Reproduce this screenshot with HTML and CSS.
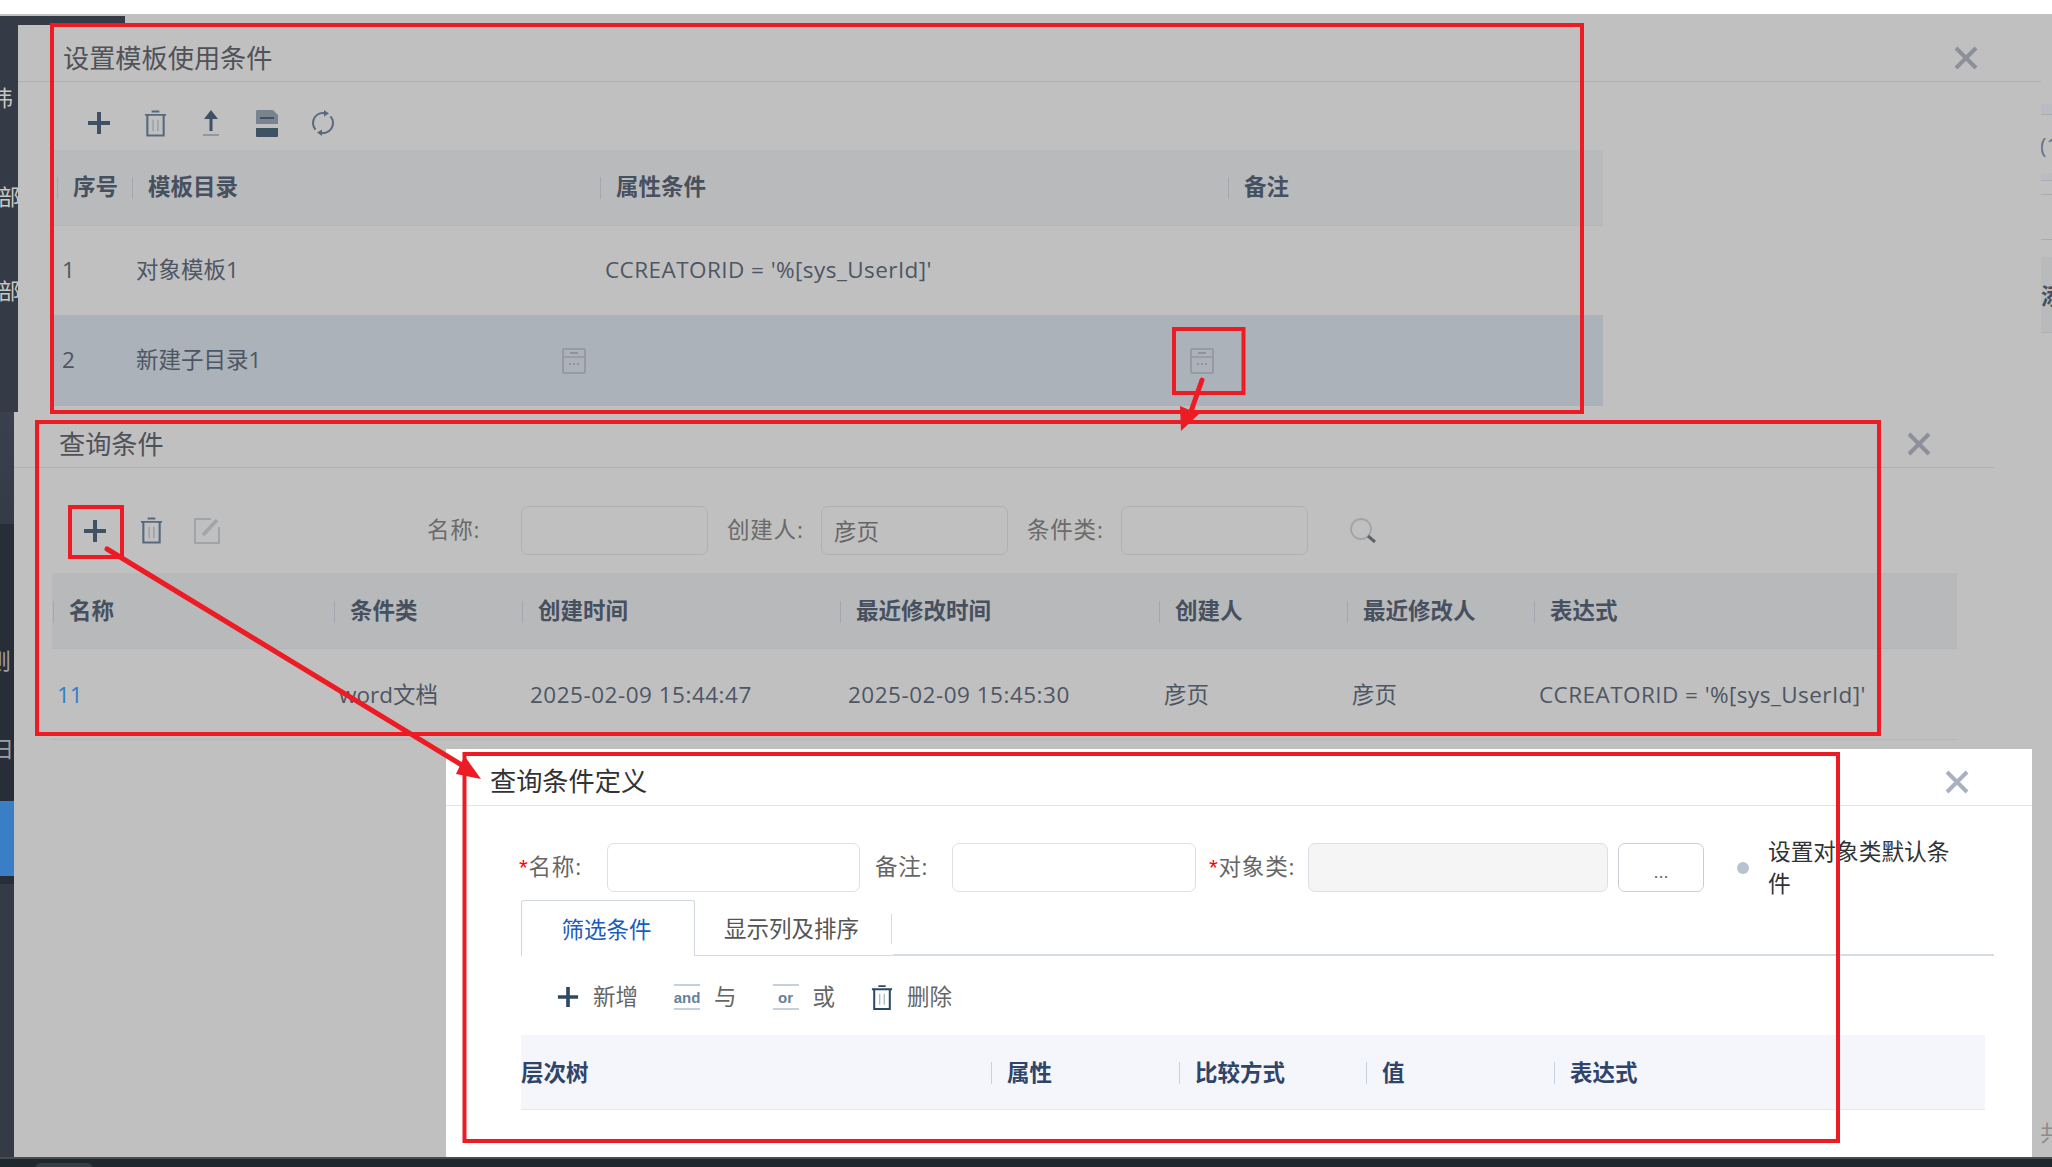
FILE: index.html
```html
<!DOCTYPE html>
<html lang="zh-CN">
<head>
<meta charset="utf-8">
<title>查询条件定义</title>
<link rel="stylesheet" href="styles.css">
</head>
<body>
<svg class="sprite" aria-hidden="true">
  <symbol id="i-plus" viewBox="0 0 24 24"><path d="M12 1v22M1 12h22" fill="none" stroke="currentColor" stroke-width="4"/></symbol>
  <symbol id="i-trash" viewBox="0 0 24 28"><path d="M8 1.500h8M1 5h22" fill="none" stroke="currentColor" stroke-width="2"/><path d="M3.500 5v21.500h17V5" fill="none" stroke="currentColor" stroke-width="2.200"/><path d="M9.500 10v12M14.500 10v12" fill="none" stroke="currentColor" stroke-width="1.400" opacity=".4"/></symbol>
  <symbol id="i-upload" viewBox="0 0 16 26"><path d="M8 0 15 9H9.500V21H6.500V9H1Z" fill="currentColor"/><path d="M0 25h16" stroke="currentColor" stroke-width="1.600" opacity=".45"/></symbol>
  <symbol id="i-save" viewBox="0 0 22 27"><path d="M1 0h16l5 5v9H0V1z" fill="currentColor" opacity=".55"/><path d="M4 8h14" stroke="currentColor" stroke-width="2"/><path d="M0 18h22v8a1 1 0 0 1-1 1H1a1 1 0 0 1-1-1z" fill="currentColor"/></symbol>
  <symbol id="i-refresh" viewBox="0 0 24 26"><path d="M15.500 3.600A10 10 0 0 0 4.500 19.600M8.500 22.400A10 10 0 0 0 19.500 6.400" fill="none" stroke="currentColor" stroke-width="2"/><path d="M13 0l5 3.500-5 3zM11 26l-5-3.500 5-3z" fill="currentColor"/></symbol>
  <symbol id="i-doc" viewBox="0 0 24 26"><rect x="1" y="1" width="22" height="24" rx="1" fill="none" stroke="currentColor" stroke-width="1.600"/><path d="M1 9h22" stroke="currentColor" stroke-width="1.400"/><path d="M8 5h8" stroke="currentColor" stroke-width="2"/><path d="M7 16h2M11 16h2M15 16h2" stroke="currentColor" stroke-width="2"/></symbol>
  <symbol id="i-edit" viewBox="0 0 26 26"><path d="M17 1H1v24h24V9" fill="none" stroke="currentColor" stroke-width="2"/><path d="M9 17 23 2" fill="none" stroke="currentColor" stroke-width="3.500"/></symbol>
  <symbol id="i-search" viewBox="0 0 27 25"><circle cx="11" cy="11" r="10" fill="none" stroke="currentColor" stroke-width="1.800"/><path d="M18 18l7 6" fill="none" stroke="#5f6266" stroke-width="3"/></symbol>
  <symbol id="i-close" viewBox="0 0 24 24"><path d="M2 2l20 20M22 2 2 22" fill="none" stroke="currentColor" stroke-width="4"/></symbol>
</svg>

<div class="screen">
  <div class="backdrop"></div>

  <div class="side-cap"></div>
  <nav class="side side-upper">
    <span class="side-label s1">伟</span>
    <span class="side-label s2">部门</span>
    <span class="side-label s3">部门</span>
  </nav>
  <nav class="side side-lower">
    <div class="side-a"></div>
    <div class="side-b">
      <span class="side-label s4">则</span>
      <span class="side-label s5">日志</span>
    </div>
    <div class="side-active"></div>
    <div class="side-c"></div>
    <div class="side-a side-fill"></div>
  </nav>

  <div class="peek">
    <div class="peek-band b1"></div>
    <div class="peek-text p1">(1</div>
    <div class="peek-band b2"></div>
    <div class="peek-line l1"></div>
    <div class="peek-line l2"></div>
    <div class="peek-head">添</div>
    <div class="peek-text p2">共</div>
  </div>

  <section class="dialog dlg-one">
    <header class="dlg-head">
      <h2 class="dlg-title">设置模板使用条件</h2>
      <svg class="close"><use href="#i-close"/></svg>
    </header>
    <div class="tools tools-one">
      <span class="tool"><svg class="ic-plus"><use href="#i-plus"/></svg></span>
      <span class="tool"><svg class="ic-trash"><use href="#i-trash"/></svg></span>
      <span class="tool"><svg class="ic-upload"><use href="#i-upload"/></svg></span>
      <span class="tool"><svg class="ic-save"><use href="#i-save"/></svg></span>
      <span class="tool"><svg class="ic-refresh"><use href="#i-refresh"/></svg></span>
    </div>
    <div class="table t-one">
      <div class="thead row-one">
        <div class="th">序号</div><div class="th">模板目录</div><div class="th">属性条件</div><div class="th">备注</div>
      </div>
      <div class="tr row-one r-plain">
        <div class="td">1</div><div class="td pad-cjk">对象模板1</div><div class="td expr">CCREATORID = '%[sys_UserId]'</div><div class="td"></div>
      </div>
      <div class="tr row-one r-selected">
        <div class="td">2</div>
        <div class="td td-end pad-cjk">
          <span class="cell-text">新建子目录1</span>
          <svg class="ic-doc"><use href="#i-doc"/></svg>
        </div>
        <div class="td td-end"><svg class="ic-doc"><use href="#i-doc"/></svg></div>
        <div class="td"></div>
      </div>
    </div>
  </section>

  <section class="dialog dlg-two">
    <header class="dlg-head">
      <h2 class="dlg-title">查询条件</h2>
      <svg class="close"><use href="#i-close"/></svg>
    </header>
    <div class="tools tools-two">
      <span class="tool"><svg class="ic-plus"><use href="#i-plus"/></svg></span>
      <span class="tool"><svg class="ic-trash"><use href="#i-trash"/></svg></span>
      <span class="tool"><svg class="ic-edit"><use href="#i-edit"/></svg></span>
      <div class="filters">
        <label class="filter"><span class="filter-label">名称:</span><input class="field dim"></label>
        <label class="filter"><span class="filter-label">创建人:</span><input class="field dim" value="彦页"></label>
        <label class="filter"><span class="filter-label">条件类:</span><input class="field dim"></label>
        <svg class="ic-search"><use href="#i-search"/></svg>
      </div>
    </div>
    <div class="table t-two">
      <div class="thead row-two">
        <div class="th">名称</div><div class="th">条件类</div><div class="th">创建时间</div><div class="th">最近修改时间</div><div class="th">创建人</div><div class="th">最近修改人</div><div class="th">表达式</div>
      </div>
      <div class="tr row-two r-plain">
        <div class="td link">11</div><div class="td">word文档</div><div class="td pad-date">2025-02-09 15:44:47</div><div class="td pad-date">2025-02-09 15:45:30</div><div class="td">彦页</div><div class="td">彦页</div><div class="td expr">CCREATORID = '%[sys_UserId]'</div>
      </div>
    </div>
  </section>

  <section class="dialog dlg-three">
    <header class="dlg-head">
      <h2 class="dlg-title">查询条件定义</h2>
      <svg class="close"><use href="#i-close"/></svg>
    </header>
    <form class="form-row">
      <label class="form-label w-name"><em>*</em>名称:</label><input class="field f-name">
      <label class="form-label w-note">备注:</label><input class="field f-note">
      <label class="form-label w-class"><em>*</em>对象类:</label><input class="field f-class" disabled>
      <button class="more" type="button">...</button>
      <span class="radio"></span>
      <span class="radio-text">设置对象类默认条件</span>
    </form>
    <div class="tabs">
      <div class="tab tab-active">筛选条件</div>
      <div class="tab tab-next">显示列及排序</div>
      <div class="tab-rest"></div>
    </div>
    <div class="actions">
      <span class="action"><svg class="ic-plus-sm"><use href="#i-plus"/></svg>新增</span>
      <span class="action"><span class="logic">and</span>与</span>
      <span class="action"><span class="logic">or</span>或</span>
      <span class="action"><svg class="ic-trash-sm"><use href="#i-trash"/></svg>删除</span>
    </div>
    <div class="thead-three">
      <div class="th first">层次树</div><div class="th">属性</div><div class="th">比较方式</div><div class="th">值</div><div class="th">表达式</div>
    </div>
  </section>

  <div class="taskbar"><span class="task-tab"></span></div>

  <svg class="marks" viewBox="0 0 2052 1167" aria-hidden="true">
    <rect x="52" y="25" width="1530" height="387"/>
    <rect x="37" y="422" width="1842" height="312"/>
    <rect x="464.500" y="754" width="1373.500" height="387"/>
    <rect x="1174" y="329" width="69.500" height="64"/>
    <rect x="70" y="507" width="52" height="50"/>
    <path class="arrow" d="M1202 380 1188 420"/>
    <polygon points="1181,431 1180,406 1199,414"/>
    <path class="arrow" d="M107 549 470 770"/>
    <polygon points="481,779 456,774 464.500,756"/>
  </svg>
</div>
</body>
</html>
```
FILE: styles.css
```css
* { box-sizing: border-box; }
html, body { margin: 0; padding: 0; background: #fff; }
body { font-family: "Open Sans", "Noto Sans CJK SC", "Liberation Sans", sans-serif; font-size: 22.5px; line-height: 1; }
.sprite { display: none; }
svg { display: block; }

.screen { position: relative; width: 2052px; height: 1167px; overflow: hidden; background: #fff; }
.backdrop { position: absolute; left: 0; right: 0; top: 14px; bottom: 10px; background: #c0c0c0; }

/* sidebar behind the dialogs */
.side-cap { position: absolute; left: 0; top: 16px; width: 125px; height: 9px; background: #343a46; }
.side { position: absolute; left: 0; overflow: hidden; display: flex; flex-direction: column; background: #343a46; }
.side-upper { top: 25px; width: 18px; height: 387px; padding-top: 60px; }
.side-lower { top: 412px; width: 14px; height: 745px; }
.side-label { display: block; white-space: nowrap; font-size: 22px; line-height: 24px; color: #c9c9c4; }
.s1 { margin-left: -9px; }
.s2 { margin-top: 75px; margin-left: -2px; }
.s3 { margin-top: 70px; margin-left: -2px; }
.side-a { height: 112px; background: linear-gradient(#3a404d, #343a46); }
.side-b { height: 277px; padding-top: 124px; background: #272e38; }
.s4 { margin-left: -11px; color: #9a9fa6; }
.s5 { margin-top: 64px; margin-left: -8px; color: #9a9fa6; }
.side-active { height: 75px; background: #3a7fc6; }
.side-c { height: 8px; background: #272e38; }
.side-fill { flex: 1; background: #343a46; }

.taskbar { position: absolute; left: 0; right: 0; bottom: 0; height: 10px; background: #1f272f; border-top: 2px solid #474c52; }
.task-tab { position: absolute; left: 35px; top: 4px; width: 58px; height: 6px; background: #363d45; border-radius: 6px 6px 0 0; }

/* slice of the page at the right edge */
.peek { position: absolute; left: 2041px; top: 14px; width: 11px; height: 1143px; overflow: hidden; display: flex; flex-direction: column; }
.peek-band { flex: none; background: #b9bdc2; border-bottom: 1px solid #a8adb3; }
.b1 { margin-top: 90px; height: 11px; }
.b2 { margin-top: 16px; height: 8px; }
.peek-text { flex: none; white-space: nowrap; font-size: 22px; line-height: 24px; color: #6b7280; }
.p1 { margin-top: 18px; margin-left: -1px; }
.peek-line { flex: none; height: 1px; background: #a9abad; }
.l1 { margin-top: 13px; }
.l2 { margin-top: 44px; }
.peek-head { flex: none; margin-top: 17px; height: 76px; display: flex; align-items: center; white-space: nowrap; font-weight: 700; font-size: 22px; color: #46505e; background: #b9babc; border-bottom: 1px solid #aeb1b5; }
.p2 { margin-top: 787px; margin-left: -1px; color: #8c8c8c; }

/* dialogs */
.dialog { position: absolute; }
.dlg-head { display: flex; align-items: center; justify-content: space-between; height: 47px; padding-right: 63px; border-bottom: 1px solid #b0b0b4; }
.dlg-title { margin: 0; font-size: 26.200px; font-weight: 400; color: #4f5258; }
.close { width: 24px; height: 24px; color: #8d9099; }

.dlg-one { left: 18px; top: 35px; width: 2023px; }
.dlg-one .dlg-head { padding-left: 45px; }
.dlg-two { left: 14px; top: 421px; width: 1980px; }
.dlg-two .dlg-head { padding-left: 45px; }

.tools { display: flex; align-items: center; padding-left: 53px; color: #3f5164; }
.tools-one { height: 68px; padding-top: 14px; }
.tools-two { height: 105px; padding-top: 20px; }
.tool { flex: none; width: 56px; display: flex; justify-content: center; }
.ic-plus { width: 24px; height: 24px; }
.ic-trash { width: 23px; height: 27px; color: #566a7c; }
.ic-upload { width: 16px; height: 26px; }
.ic-save { width: 22px; height: 27px; }
.ic-refresh { width: 24px; height: 26px; color: #566a7c; }
.ic-edit { width: 26px; height: 26px; color: #a0a5a9; }
.ic-doc { width: 24px; height: 26px; color: #8f959d; }
.ic-search { width: 27px; height: 25px; color: #a2a5a8; margin-left: 23px; }

.filters { display: flex; align-items: center; gap: 19px; margin-left: 192px; }
.filter { display: flex; align-items: center; }
.filter-label { width: 94px; letter-spacing: .8px; color: #6a6a6a; }
.field { display: block; height: 49px; padding: 0 12px; font: inherit; color: #666; background: transparent; border: 1px solid #dcdfe6; border-radius: 7px; outline: none; }
.field.dim { width: 187px; border-color: #aeb0b4; color: #666; }

.table { margin-left: 34px; }
.thead, .tr { display: grid; align-items: center; }
.thead { height: 76px; background: #b9babc; border-bottom: 1px solid #b2b6bc; }
.th { position: relative; padding-left: 16px; font-weight: 700; color: #47505f; white-space: nowrap; }
.th::before { content: ""; position: absolute; left: 0; top: 0; bottom: 0; margin: auto 0; width: 1px; height: 22px; background: #a2a8ae; }
.td { padding-left: 5px; color: #4e5664; white-space: nowrap; }
.expr { letter-spacing: .44px; }
.pad-cjk { padding-left: 4px; }
.row-one { padding-left: 5px; grid-template-columns: 75px 468px 628px 1fr; }
.r-plain { background: #c0c0c0; }
.t-one { width: 1551px; }
.t-one .tr { height: 89px; }
.t-one .r-selected { height: 91px; background: #abb2ba; }
.td-end { display: flex; align-items: center; justify-content: flex-end; padding-right: 14px; }
.cell-text { margin-right: auto; }

.t-two { margin-left: 38px; width: 1905px; }
.row-two { padding-left: 1px; grid-template-columns: 281px 188px 318px 319px 188px 187px 1fr; }
.t-two .thead { height: 76px; padding-top: 2px; background: #b8b9bb; }
.t-two .tr { height: 91px; padding-top: 2px; border-bottom: 1px solid #b4b6ba; }
.link { color: #2f7fc8; padding-left: 4px; }
.pad-date { padding-left: 8px; letter-spacing: .5px; }

.dlg-three { left: 446px; top: 749px; width: 1586px; height: 408px; background: #fff; }
.dlg-three .dlg-head { height: 57px; padding: 8px 63px 0 44px; border-bottom-color: #dfe3ea; }
.dlg-three .close { margin-top: 2px; color: #a9b1c0; }
.dlg-three .dlg-title { color: #333; }

.form-row { display: flex; align-items: center; height: 49px; margin: 37px 0 8px; padding-left: 73px; }
.form-label { flex: none; letter-spacing: .8px; color: #666; white-space: nowrap; }
.form-label em { font-style: normal; font-family: "Liberation Sans", sans-serif; color: #f00; }
.w-name { width: 88px; }
.w-note { width: 77px; margin-left: 15px; }
.w-class { width: 99px; margin-left: 13px; }
.f-name { width: 253px; }
.f-note { width: 244px; }
.f-class { width: 300px; background: #f5f5f5; }
.more { flex: none; width: 86px; height: 49px; margin-left: 10px; padding: 10px 0 0; font: 18px "Liberation Sans", sans-serif; color: #666; background: #fff; border: 1px solid #c9cdd3; border-radius: 7px; }
.radio { flex: none; width: 12px; height: 12px; margin-left: 33px; border-radius: 50%; background: #b8c2d3; }
.radio-text { flex: none; width: 190px; margin-left: 19px; font-size: 22.700px; line-height: 32px; color: #333; }

.tabs { display: flex; height: 56px; margin: 0 38px 0 75px; }
.tab { flex: none; display: flex; align-items: center; padding-top: 4px; }
.tab-active { width: 174px; justify-content: center; padding-right: 3px; color: #1a5cbf; border: 1px solid #d0d7e2; border-bottom: none; border-radius: 3px 3px 0 0; }
.tab-next { position: relative; width: 198px; padding-left: 29px; color: #555; border-bottom: 1px solid #d5dbe6; }
.tab-next::after { content: ""; position: absolute; right: 1px; top: 14px; width: 1px; height: 30px; background: #d5dbe6; }
.tab-rest { flex: 1; border-bottom: 2px solid #d5dbe6; }

.actions { display: flex; align-items: center; gap: 36px; height: 79px; padding-left: 111px; padding-top: 3px; color: #666; }
.action { display: flex; align-items: center; gap: 14px; white-space: nowrap; }
.ic-plus-sm { width: 22px; height: 22px; color: #2e4a62; }
.ic-trash-sm { width: 22px; height: 27px; color: #2e4a62; }
.logic { flex: none; display: flex; align-items: center; justify-content: center; width: 26px; height: 26px; font: 700 15px "Liberation Sans", sans-serif; color: #668199; border-top: 2px solid #c6d0da; border-bottom: 2px solid #c6d0da; }

.thead-three { display: grid; align-items: center; grid-template-columns: 470px 188px 187px 188px 1fr; width: 1464px; height: 75px; margin-left: 75px; padding-top: 2px; background: #f4f6fb; border-bottom: 1px solid #e4e9f0; }
.thead-three .th { color: #2f4468; }
.thead-three .th::before { background: #c8d2de; }
.thead-three .first { padding-left: 0; }
.thead-three .first::before { display: none; }

/* red annotations drawn over the screenshot */
.marks { position: absolute; left: 0; top: 0; width: 2052px; height: 1167px; }
.marks rect { fill: none; stroke: #ed1c24; stroke-width: 4; }
.marks .arrow { fill: none; stroke: #ed1c24; stroke-width: 5; stroke-linecap: round; }
.marks polygon { fill: #ed1c24; }
```
